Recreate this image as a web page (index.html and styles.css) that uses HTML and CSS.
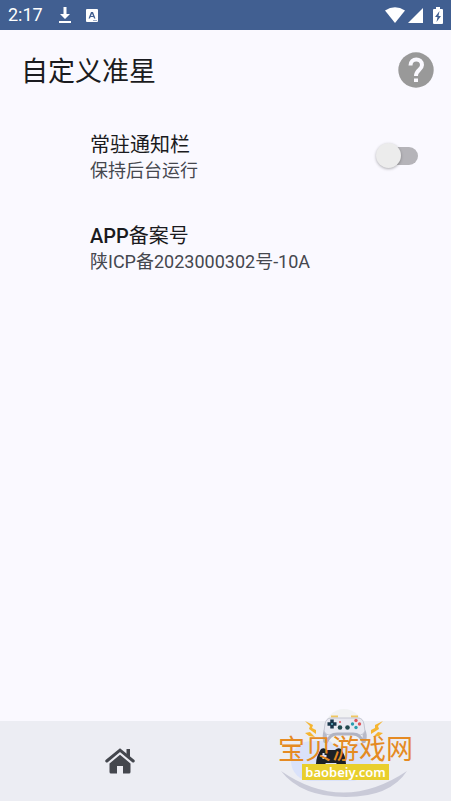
FILE: index.html
```html
<!DOCTYPE html>
<html lang="zh-CN">
<head>
<meta charset="utf-8">
<meta name="viewport" content="width=device-width, initial-scale=1">
<title>自定义准星</title>
<link rel="stylesheet" href="styles.css">
</head>
<body>
<div class="app">
  <div class="status">
    <span class="time">2:17</span>
    <svg class="download" width="14" height="18" viewBox="0 0 14 18" aria-hidden="true"><path d="M5.500 1h3v7H12l-5 5-5-5h3.500zM1 15h12v2H1z"/></svg>
    <svg width="12" height="13" viewBox="0 0 12 13" aria-hidden="true"><rect width="12" height="13" rx="1"/><path class="cut" fill-rule="evenodd" d="M2.500 9.500 5 3h2l2.500 6.500H8L7.500 8h-3L4 9.500zM5 7h2L6 4.500zM7 11h4v.6H7z"/></svg>
    <span class="spacer"></span>
    <svg width="20" height="16" viewBox="0 0 20 16" aria-hidden="true"><path d="M0 3.500Q10-3 20 3.500L10 16z"/></svg>
    <svg class="signal" width="15" height="15" viewBox="0 0 15 15" aria-hidden="true"><path d="M15 0v15H0z"/></svg>
    <svg class="battery" width="10" height="17" viewBox="0 0 10 17" aria-hidden="true"><path d="M3 0h4v2h2q1 0 1 1v13q0 1-1 1H1q-1 0-1-1V3q0-1 1-1h2z"/><path class="cut" d="M6.500 4 2 10h2.500L3.500 15 8 9H5.500z"/></svg>
  </div>
  <header class="bar">
    <h1>自定义准星</h1>
    <button class="help" type="button" aria-label="帮助">
      <svg width="36" height="36" viewBox="0 0 36 36" aria-hidden="true"><circle cx="18" cy="18" r="17.700"/><path class="mark" d="M12.500 13.500C12.500 5.500 24 5.500 24 13C24 18 18 17.500 18 24"/><path class="dot" d="M16 26.500h4v3.500h-4z"/></svg>
    </button>
  </header>
  <main class="list">
    <div class="row">
      <label class="copy" for="resident"><span class="name">常驻通知栏</span><span class="note">保持后台运行</span></label>
      <input class="switch" id="resident" type="checkbox" role="switch">
    </div>
    <div class="row">
      <div class="copy"><span class="name"><span class="latin">APP</span>备案号</span><span class="note">陕ICP备2023000302号-10A</span></div>
    </div>
  </main>
  <nav class="tabs">
    <button class="tab" type="button" aria-label="首页">
      <svg width="30" height="26" viewBox="0 0 30 26" aria-hidden="true"><path d="M4.500 15.500 15 6.800l10.500 8.700V24q0 1.500-1.500 1.500h-6V18h-6v7.500H6Q4.500 25.500 4.500 24z"/><path d="M21.500 1h3.500v8h-3.500z"/><path class="roof" d="M1.800 13 15 2.200 28.200 13"/></svg>
    </button>
    <div class="slot">
      <button class="tab active" type="button" aria-label="设置">
        <svg width="32" height="26" viewBox="0 0 32 26" aria-hidden="true"><path fill-rule="evenodd" d="M6 1q3-2 6 1h8q3-3 6-1 5 7 5 16 0 6-4 5l-6-7H11l-6 7q-4 1-4-5Q1 8 6 1zM7.500 5v2h-2v2h2v2h2V9h2V7h-2V5z"/></svg>
      </button>
      <div class="brand">
        <svg class="art" width="140" height="96" viewBox="0 0 140 96" aria-hidden="true">
          <circle cx="68" cy="22" r="19" fill="#f1f2f3"/>
          <path d="M5 65Q67 108 131 65Q114 91 70 91Q25 91 5 65z" fill="#c9cad8"/>
          <path d="M55 10.500h7M75 10.500h7" stroke="#efc660" stroke-width="2"/>
          <path d="M50 24q-2 5-1 11M87 24q3 5 1 11" fill="none" stroke="#b8bac8" stroke-width="4" stroke-linecap="round"/>
          <path d="M55 12h27q5 0 6 6l1 7-2 3q-3 2-5 0H56q-3 2-6 0l-2-3 1-7q1-6 6-6z" fill="#e8e9f1" stroke="#c4c6d2"/>
          <path d="M50 37q4-9 11-9h16q7 0 11 9" fill="none" stroke="#b1b3c2" stroke-width="3"/>
          <path d="M56 13.500v9M51.500 18h9" stroke="#18364a" stroke-width="3.500"/>
          <circle cx="56" cy="18" r="1" fill="#6bb9cb"/>
          <g fill="#20494e"><circle cx="64" cy="21.500" r="2.300"/><circle cx="71.500" cy="21.500" r="2.300"/></g>
          <g fill="#de555b"><circle cx="80" cy="14.500" r="1.700"/><circle cx="83.500" cy="18" r="1.700"/><circle cx="64" cy="16" r="1"/></g>
          <g fill="#2a9daf"><circle cx="80" cy="21.500" r="1.700"/><circle cx="76.500" cy="18" r="1.700"/></g>
          <path d="M29 15l8 4-1 3 4 2v4l-7-5 1-3zM107 15l-8 4 0 3-4 2v4l8-5-1-3zM29 27l5-1 5 5-6-1zM107 27l-5-1-5 5 6-1z" fill="#f5b530"/>
        </svg>
        <span class="brand-name">宝贝游戏网</span>
        <span class="brand-url">baobeiy.com</span>
      </div>
    </div>
  </nav>
</div>
</body>
</html>
```
FILE: styles.css
```css
* { box-sizing: border-box; }
body {
  margin: 0;
  background: #faf9ff;
  color: #1a1b20;
  font-family: Roboto, "Noto Sans CJK SC", sans-serif;
}
button {
  border: 0;
  padding: 0;
  background: transparent;
}
svg { display: block; }
.app {
  min-height: 100vh;
  display: flex;
  flex-direction: column;
}
.status {
  height: 30px;
  padding: 0 8px;
  display: flex;
  align-items: center;
  background: #415f91;
  color: #fff;
}
.status svg { fill: #fff; }
.status .cut { fill: #415f91; }
.time {
  font-size: 18px;
  line-height: 30px;
}
.status .download { margin: 0 14px 0 15px; }
.spacer { flex: 1; }
.status .signal { margin: 0 10px 0 3px; }
.bar {
  display: flex;
  align-items: center;
  justify-content: space-between;
  height: 80px;
  padding: 0 17px 0 21px;
}
h1 {
  margin: 0;
  padding-top: 4px;
  font-size: 27px;
  line-height: 40px;
  font-weight: 400;
}
.help circle { fill: #999; }
.help .mark {
  fill: none;
  stroke: #faf9ff;
  stroke-width: 4;
}
.help .dot { fill: #faf9ff; }
.list {
  flex: 1;
}
.row {
  display: flex;
  align-items: center;
  justify-content: space-between;
  height: 91px;
  padding: 0 33px 0 90px;
}
.copy {
  display: flex;
  flex-direction: column;
  padding-top: 4px;
}
.name {
  font-size: 20px;
  line-height: 26px;
}
.latin { font-weight: 500; }
.note {
  font-size: 18px;
  line-height: 25px;
  color: #45474e;
}
.switch {
  appearance: none;
  position: relative;
  width: 40px;
  height: 18px;
  margin: 0;
  border-radius: 9px;
  background: #b5b4b9;
}
.switch::before {
  content: "";
  position: absolute;
  left: -2px;
  top: -4px;
  width: 25px;
  height: 25px;
  border-radius: 50%;
  background: #ececec;
  box-shadow: 0 1px 3px rgb(0 0 0 / 30%);
}
.switch:checked::before { left: 18px; }
.tabs {
  display: grid;
  grid-template-columns: 1fr 1fr;
  height: 80px;
  padding: 0 15px;
  background: #ecedf3;
}
.tab {
  display: grid;
  place-items: center;
  fill: #44474e;
}
.roof {
  fill: none;
  stroke: #44474e;
  stroke-width: 3;
  stroke-linecap: round;
}
.slot {
  position: relative;
  display: grid;
  place-items: center;
}
.active {
  width: 80px;
  height: 40px;
  border-radius: 20px;
  background: #dae2fa;
  fill: #1c2026;
}
.brand {
  position: absolute;
  top: -15px;
  left: 50px;
  width: 140px;
  height: 96px;
  display: flex;
  flex-direction: column;
  align-items: center;
  padding-top: 31px;
}
.art {
  position: absolute;
  inset: 0;
}
.brand-name {
  position: relative;
  font-size: 27px;
  line-height: 27px;
  color: #e58a22;
  white-space: nowrap;
}
.brand-url {
  position: relative;
  padding: 0 3px;
  font-family: "Noto Sans", sans-serif;
  font-size: 13px;
  line-height: 16px;
  font-weight: 600;
  color: #fff;
  background: #e9cf2d;
}
```
